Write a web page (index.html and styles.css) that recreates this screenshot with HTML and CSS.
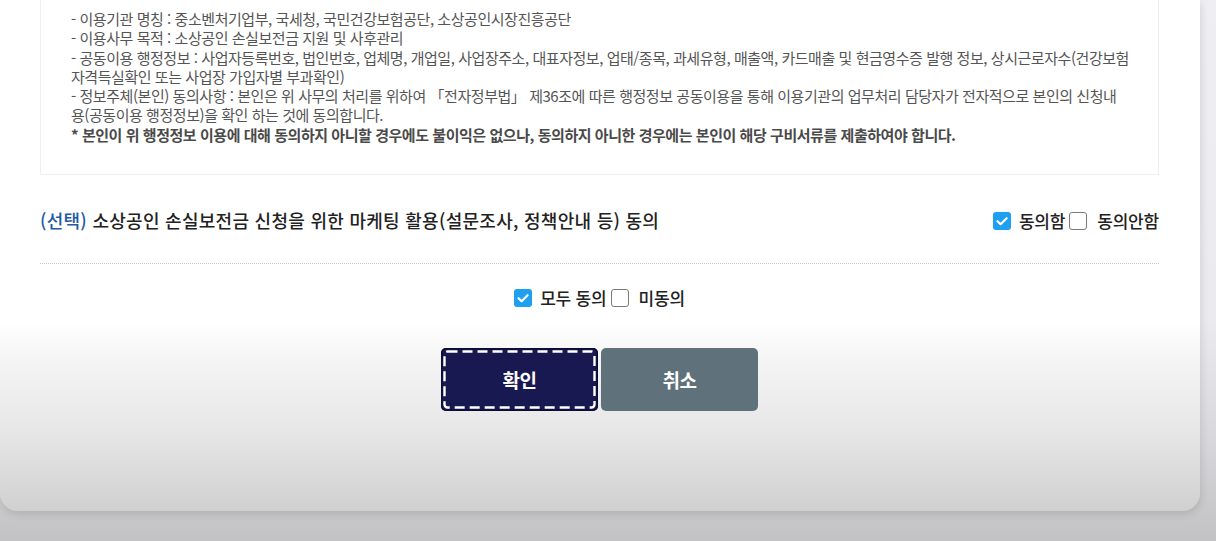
FILE: index.html
```html
<!DOCTYPE html>
<html lang="ko">
<head>
<meta charset="utf-8">
<title>행정정보 공동이용 동의</title>
<link rel="stylesheet" href="styles.css">
</head>
<body>
<div class="modal">
  <div class="terms">
    <p>- 이용기관 명칭 : 중소벤처기업부, 국세청, 국민건강보험공단, 소상공인시장진흥공단</p>
    <p>- 이용사무 목적 : 소상공인 손실보전금 지원 및 사후관리</p>
    <p>- 공동이용 행정정보 : 사업자등록번호, 법인번호, 업체명, 개업일, 사업장주소, 대표자정보, 업태/종목, 과세유형, 매출액, 카드매출 및 현금영수증 발행 정보, 상시근로자수(건강보험<br>자격득실확인 또는 사업장 가입자별 부과확인)</p>
    <p>- 정보주체(본인) 동의사항 : 본인은 위 사무의 처리를 위하여 「전자정부법」 제36조에 따른 행정정보 공동이용을 통해 이용기관의 업무처리 담당자가 전자적으로 본인의 신청내<br>용(공동이용 행정정보)을 확인 하는 것에 동의합니다.</p>
    <p class="notice">* 본인이 위 행정정보 이용에 대해 동의하지 아니할 경우에도 불이익은 없으나, 동의하지 아니한 경우에는 본인이 해당 구비서류를 제출하여야 합니다.</p>
  </div>

  <div class="consent-row">
    <h3 class="consent-title"><span class="tag">(선택)</span> 소상공인 손실보전금 신청을 위한 마케팅 활용(설문조사, 정책안내 등) 동의</h3>
    <div class="choices">
      <label class="choice"><span class="box checked"><svg viewBox="0 0 18 18" width="18" height="18"><path d="M4.5 9.2 L7.6 12.2 L13.6 6.2" fill="none" stroke="#fff" stroke-width="2.2" stroke-linecap="round" stroke-linejoin="round"/></svg></span><span class="choice-text">동의함</span></label>
      <label class="choice"><span class="box"></span><span class="choice-text">동의안함</span></label>
    </div>
  </div>

  <div class="all-row">
    <label class="choice"><span class="box checked"><svg viewBox="0 0 18 18" width="18" height="18"><path d="M4.5 9.2 L7.6 12.2 L13.6 6.2" fill="none" stroke="#fff" stroke-width="2.2" stroke-linecap="round" stroke-linejoin="round"/></svg></span><span class="choice-text">모두 동의</span></label>
    <label class="choice"><span class="box"></span><span class="choice-text">미동의</span></label>
  </div>

  <div class="actions">
    <button class="btn primary" type="button">확인<svg class="focus-ring" viewBox="0 0 157 63" preserveAspectRatio="none"><rect x="3.5" y="3.5" width="150" height="56" rx="3" ry="3" fill="none" stroke="#fff" stroke-width="2.4" stroke-dasharray="10 5"/></svg></button>
    <button class="btn secondary" type="button">취소</button>
  </div>
</div>
</body>
</html>
```

FILE: styles.css
```css
html, body {
  margin: 0;
  padding: 0;
}

body {
  width: 1216px;
  height: 541px;
  overflow: hidden;
  font-family: "Noto Sans CJK KR", "Noto Sans", sans-serif;
  background: linear-gradient(to bottom, #eeeef3 0, #ebebef 320px, #d8d8dc 440px, #c2c2c4 541px);
}

.modal {
  width: 1200px;
  height: 511px;
  box-sizing: border-box;
  padding: 0 41px 0 40px;
  border-radius: 0 0 18px 18px;
  background: linear-gradient(to bottom, #ffffff 0, #ffffff 322px, #f3f3f3 365px, #e7e7e7 430px, #d0d0d0 511px);
  box-shadow: 1px 3px 8px rgba(0, 0, 0, 0.12);
}

.terms {
  border: 1px solid #efefef;
  border-top: none;
  padding: 9px 30px 30px 30px;
  color: #555;
  font-size: 15px;
  line-height: 19.3px;
  letter-spacing: -0.45px;
}

.terms p {
  margin: 0;
  white-space: nowrap;
}

.terms .notice {
  font-weight: 700;
  color: #4a4a4a;
}

.consent-row {
  display: flex;
  align-items: center;
  justify-content: space-between;
  padding: 33px 0 30px;
  border-bottom: 1px dotted #c8c8c8;
}

.consent-title {
  margin: 0;
  font-size: 18px;
  line-height: 25px;
  font-weight: 500;
  color: #222;
  letter-spacing: 0.28px;
}

.tag {
  color: #1f58a3;
}

.choices {
  display: flex;
  align-items: center;
  gap: 4px;
}

.choice {
  display: flex;
  align-items: center;
  gap: 8px;
  font-size: 17px;
  line-height: 20px;
  color: #222;
  letter-spacing: -0.2px;
  font-weight: 500;
}

.box {
  width: 18px;
  height: 18px;
  box-sizing: border-box;
  border: 1px solid #7a7a7a;
  border-radius: 3px;
  background: #fff;
  display: block;
}

.box svg {
  display: block;
}

.box.checked {
  border: none;
  background: #1e9ff0;
}

.choice + .choice .box {
  margin-right: 2px;
}

.all-row {
  display: flex;
  justify-content: center;
  align-items: center;
  gap: 4px;
  margin-top: 24px;
}

.actions {
  display: flex;
  justify-content: center;
  gap: 3px;
  margin-top: 40px;
}

.btn {
  position: relative;
  width: 157px;
  height: 63px;
  border: none;
  border-radius: 5px;
  font-family: "Noto Sans CJK KR", "Noto Sans", sans-serif;
  font-size: 19px;
  font-weight: 700;
  color: #fff;
  letter-spacing: -0.5px;
  padding: 0;
}

.primary {
  background: #191952;
  box-shadow: inset 0 0 0 1.5px #0c0c33;
}

.secondary {
  background: #5f717b;
}

.focus-ring {
  position: absolute;
  left: 0;
  top: 0;
  width: 157px;
  height: 63px;
  pointer-events: none;
}
```
